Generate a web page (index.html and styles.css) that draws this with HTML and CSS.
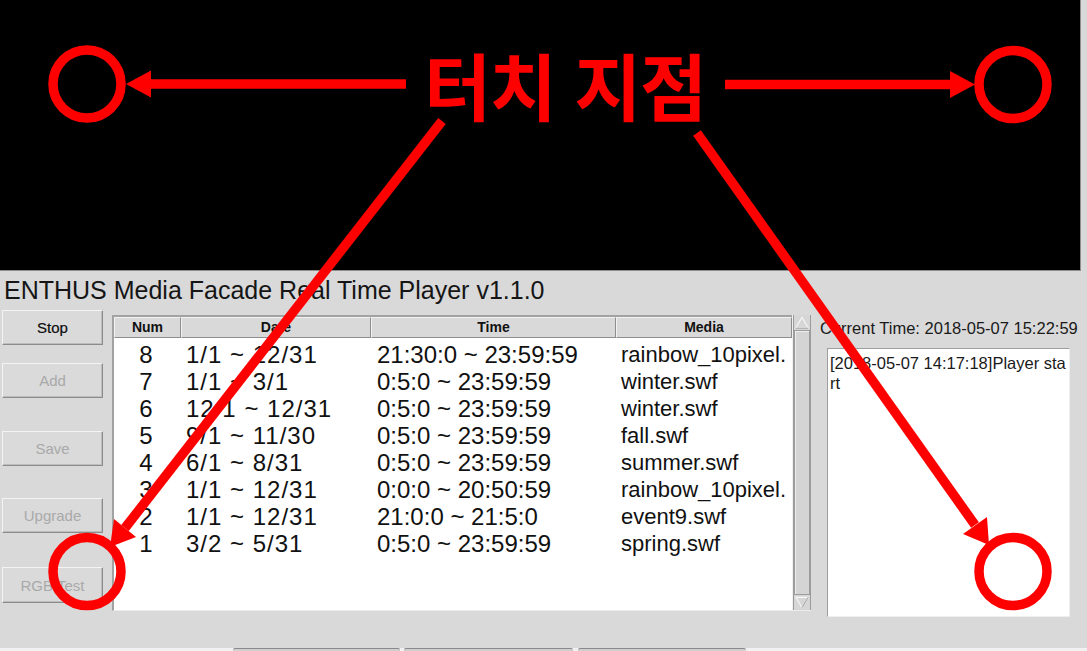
FILE: index.html
```html
<!DOCTYPE html>
<html lang="ko">
<head>
<meta charset="utf-8">
<title>ENTHUS Media Facade Real Time Player</title>
<link rel="stylesheet" href="styles.css">
</head>
<body>
<div class="page">
  <div class="video"></div>
  <div class="title">ENTHUS Media Facade Real Time Player v1.1.0</div>
  <div class="main">
    <div class="buttons">
      <button class="btn btn-stop">Stop</button>
      <button class="btn btn-add" disabled>Add</button>
      <button class="btn btn-save" disabled>Save</button>
      <button class="btn btn-upgrade" disabled>Upgrade</button>
      <button class="btn btn-rgb" disabled>RGB Test</button>
    </div>
    <div class="table-frame">
      <div class="table">
        <div class="thead">
          <div class="th">Num</div>
          <div class="th">Date</div>
          <div class="th">Time</div>
          <div class="th">Media</div>
        </div>
        <div class="tbody">
          <div class="row"><span class="c-num">8</span><span class="c-date">1/1 ~ 12/31</span><span class="c-time">21:30:0 ~ 23:59:59</span><span class="c-media">rainbow_10pixel.</span></div>
          <div class="row"><span class="c-num">7</span><span class="c-date">1/1 ~ 3/1</span><span class="c-time">0:5:0 ~ 23:59:59</span><span class="c-media">winter.swf</span></div>
          <div class="row"><span class="c-num">6</span><span class="c-date">12/1 ~ 12/31</span><span class="c-time">0:5:0 ~ 23:59:59</span><span class="c-media">winter.swf</span></div>
          <div class="row"><span class="c-num">5</span><span class="c-date">9/1 ~ 11/30</span><span class="c-time">0:5:0 ~ 23:59:59</span><span class="c-media">fall.swf</span></div>
          <div class="row"><span class="c-num">4</span><span class="c-date">6/1 ~ 8/31</span><span class="c-time">0:5:0 ~ 23:59:59</span><span class="c-media">summer.swf</span></div>
          <div class="row"><span class="c-num">3</span><span class="c-date">1/1 ~ 12/31</span><span class="c-time">0:0:0 ~ 20:50:59</span><span class="c-media">rainbow_10pixel.</span></div>
          <div class="row"><span class="c-num">2</span><span class="c-date">1/1 ~ 12/31</span><span class="c-time">21:0:0 ~ 21:5:0</span><span class="c-media">event9.swf</span></div>
          <div class="row"><span class="c-num">1</span><span class="c-date">3/2 ~ 5/31</span><span class="c-time">0:5:0 ~ 23:59:59</span><span class="c-media">spring.swf</span></div>
        </div>
      </div>
      <div class="scrollbar">
        <div class="sb-btn">
          <svg width="17" height="15" viewBox="0 0 17 15"><polygon points="2,13 8.5,2 15,13" fill="#d6d6d6" stroke="#f7f7f7" stroke-width="1.2"/><line x1="2" y1="13.5" x2="15" y2="13.5" stroke="#9a9a9a" stroke-width="1"/></svg>
        </div>
        <div class="sb-thumb"></div>
        <div class="sb-btn">
          <svg width="17" height="15" viewBox="0 0 17 15"><polygon points="2,2 8.5,13 15,2" fill="#d6d6d6" stroke="#f7f7f7" stroke-width="1.2"/><line x1="8.5" y1="13" x2="15" y2="2" stroke="#9a9a9a" stroke-width="1"/></svg>
        </div>
      </div>
    </div>
    <div class="side">
      <div class="clock">Current Time: 2018-05-07 15:22:59</div>
      <div class="log">[2018-05-07 14:17:18]Player start</div>
    </div>
  </div>
  <div class="footer">
    <div class="tab tab-1"></div>
    <div class="tab tab-2"></div>
    <div class="tab tab-3"></div>
  </div>

  <svg class="overlay" width="1087" height="651" viewBox="0 0 1087 651">
    <g fill="none" stroke="#ff0000" stroke-width="9.5">
      <circle cx="87" cy="84" r="34"/>
      <circle cx="1013" cy="84.5" r="34"/>
      <circle cx="87" cy="571.5" r="34"/>
      <circle cx="1013" cy="571.5" r="34"/>
      <line x1="406" y1="84" x2="148" y2="84"/>
      <line x1="725" y1="84.5" x2="953" y2="84.5"/>
      <line x1="442" y1="121" x2="125" y2="528"/>
      <line x1="697" y1="133" x2="975" y2="525"/>
    </g>
    <g fill="#ff0000">
      <polygon points="126,84 151,70.5 151,97.5"/>
      <polygon points="975,84.5 950,71 950,98"/>
      <polygon points="110,547 136,537 114,519"/>
      <polygon points="989,545 987,517 963,534"/>
    </g>
  </svg>
  <div class="callout">터치 지점</div>
</div>
</body>
</html>
```

FILE: styles.css
```css
* { box-sizing: border-box; }

html, body {
  margin: 0;
  padding: 0;
  background: #d9d9d9;
}

.page {
  position: relative;
  width: 1087px;
  height: 651px;
  overflow: hidden;
  background: #d9d9d9;
  font-family: "Liberation Sans", Arial, sans-serif;
  color: #111;
}

.video {
  width: 1081px;
  height: 271px;
  background: #000;
  border-right: 1px solid #8e8e8e;
  border-bottom: 1px solid #8e8e8e;
}

.title {
  height: 39px;
  padding: 4px 0 0 4px;
  font-size: 25px;
  line-height: 30px;
  color: #151515;
  white-space: nowrap;
}

.main {
  display: flex;
  align-items: flex-start;
  height: 338px;
}

/* left buttons */
.buttons {
  display: flex;
  flex-direction: column;
  margin-left: 2px;
  width: 101px;
}

.btn {
  height: 35px;
  width: 101px;
  padding: 0;
  font-family: "Liberation Sans", Arial, sans-serif;
  font-size: 15px;
  color: #1a1a1a;
  background: #dadada;
  border-top: 1px solid #f4f4f4;
  border-left: 1px solid #f4f4f4;
  border-right: 1px solid #8c8c8c;
  border-bottom: 1px solid #8c8c8c;
  box-shadow: inset -1px -1px 0 #bdbdbd;
  border-radius: 0;
}

.btn-stop { color: #0d0d0d; -webkit-text-stroke: 0.2px #0d0d0d; }
.btn:disabled { color: #a9a9a9; }
.btn-add { margin-top: 18px; }
.btn-save { margin-top: 33px; }
.btn-upgrade { margin-top: 32px; }
.btn-rgb { margin-top: 34px; height: 36px; }

/* table */
.table-frame {
  display: flex;
  margin: 5px 0 0 9px;
  width: 699px;
  height: 296px;
  border-top: 2px solid #a2a2a2;
  border-left: 2px solid #a2a2a2;
  border-bottom: 1px solid #ececec;
}

.table {
  width: 678px;
  background: #fff;
}

.thead {
  display: grid;
  grid-template-columns: 67px 190px 245px 176px;
  height: 21px;
  background: #d9d9d9;
}

.th {
  font-size: 14px;
  font-weight: bold;
  line-height: 19px;
  text-align: center;
  border-top: 1px solid #f2f2f2;
  border-left: 1px solid #f2f2f2;
  border-right: 1px solid #8e8e8e;
  border-bottom: 1px solid #8e8e8e;
  color: #111;
}

.tbody { padding-top: 3px; }

.row {
  display: grid;
  grid-template-columns: 67px 190px 245px 176px;
  height: 27px;
  line-height: 27px;
  font-size: 24px;
  white-space: nowrap;
  color: #111;
}

.row span { overflow: hidden; }
.c-num { text-align: center; padding-right: 3px; }
.c-date { padding-left: 5px; letter-spacing: 1px; }
.c-time { padding-left: 6px; }
.c-media { padding-left: 5px; font-size: 22px; }

.scrollbar {
  width: 19px;
  display: flex;
  flex-direction: column;
  background: #d9d9d9;
  border-left: 1px solid #f0f0f0;
  margin-top: -2px;
}

.sb-btn {
  height: 15px;
  display: flex;
  align-items: center;
  justify-content: center;
  background: #d6d6d6;
  border-right: 1px solid #9a9a9a;
  border-left: 1px solid #9a9a9a;
}

.sb-btn svg { display: block; }

.sb-thumb {
  flex: 1;
  background: #d4d4d4;
  border-left: 2px solid #9c9c9c;
  border-right: 2px solid #9c9c9c;
  border-top: 1px solid #9c9c9c;
  border-bottom: 1px solid #9c9c9c;
  box-shadow: inset 1px 1px 0 #ededed;
}

/* right side */
.side {
  margin-left: 9px;
  padding-top: 8px;
  display: flex;
  flex-direction: column;
}

.clock {
  font-size: 16.5px;
  line-height: 20px;
  white-space: nowrap;
  color: #1a1a1a;
}

.log {
  margin: 10px 0 0 7px;
  width: 243px;
  height: 269px;
  background: #fff;
  border-top: 1px solid #9e9e9e;
  border-left: 1px solid #9e9e9e;
  border-right: 1px solid #efefef;
  border-bottom: 1px solid #efefef;
  padding: 4px 0 0 2px;
  font-size: 16.5px;
  line-height: 20px;
  word-break: break-all;
  color: #1a1a1a;
}

/* footer tabs */
.footer {
  display: flex;
  height: 3px;
  background: #f1f1f1;
  padding-left: 233px;
}

.tab {
  height: 3px;
  background: #cfcfcf;
  border-top: 1px solid #8a8a8a;
  border-radius: 2px 2px 0 0;
}
.tab-1 { width: 167px; }
.tab-2 { width: 169px; margin-left: 4px; }
.tab-3 { width: 168px; margin-left: 5px; }

/* annotation overlay */
.overlay {
  position: absolute;
  left: 0;
  top: 0;
  pointer-events: none;
}

.callout {
  position: absolute;
  left: 424px;
  top: 47px;
  font-family: "Noto Sans CJK KR", "Noto Sans CJK SC", sans-serif;
  font-weight: bold;
  font-size: 73px;
  line-height: 73px;
  letter-spacing: -1.5px;
  color: #ff0000;
  white-space: nowrap;
  pointer-events: none;
}
```
